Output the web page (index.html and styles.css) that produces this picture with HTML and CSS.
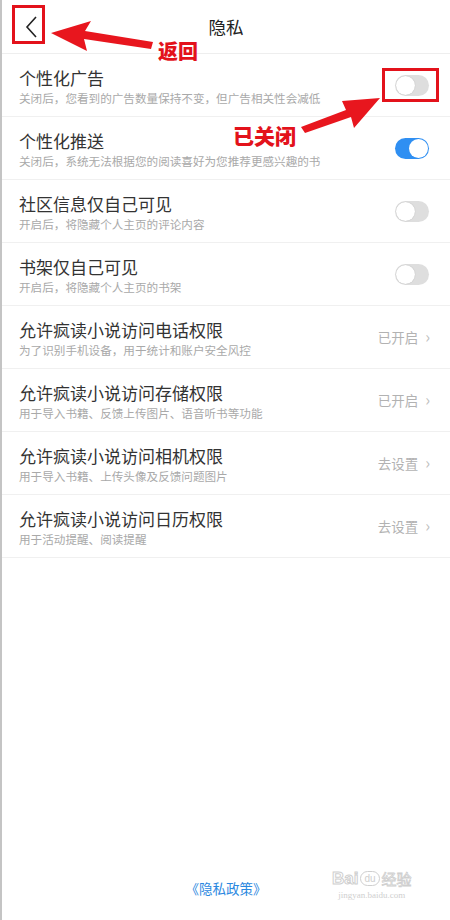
FILE: index.html
```html
<!DOCTYPE html>
<html lang="zh-CN">
<head>
<meta charset="utf-8">
<title>隐私</title>
<link rel="stylesheet" href="styles.css">
</head>
<body>
<div class="page">
  <header class="header">
    <div class="back">
      <svg width="14" height="24" viewBox="0 0 14 24"><polyline points="11,2 2,12 11,22" fill="none" stroke="#222" stroke-width="1.6" stroke-linejoin="miter"/></svg>
    </div>
    <div class="title">隐私</div>
    <div class="spacer"></div>
  </header>

  <div class="list">
    <div class="row">
      <div class="text"><div class="name">个性化广告</div><div class="desc">关闭后，您看到的广告数量保持不变，但广告相关性会减低</div></div>
      <div class="toggle"><span class="knob"></span></div>
    </div>
    <div class="row">
      <div class="text"><div class="name">个性化推送</div><div class="desc">关闭后，系统无法根据您的阅读喜好为您推荐更感兴趣的书</div></div>
      <div class="toggle on"><span class="knob"></span></div>
    </div>
    <div class="row">
      <div class="text"><div class="name">社区信息仅自己可见</div><div class="desc">开启后，将隐藏个人主页的评论内容</div></div>
      <div class="toggle"><span class="knob"></span></div>
    </div>
    <div class="row">
      <div class="text"><div class="name">书架仅自己可见</div><div class="desc">开启后，将隐藏个人主页的书架</div></div>
      <div class="toggle"><span class="knob"></span></div>
    </div>
    <div class="row">
      <div class="text"><div class="name">允许疯读小说访问电话权限</div><div class="desc">为了识别手机设备，用于统计和账户安全风控</div></div>
      <div class="status">已开启<span class="chev">›</span></div>
    </div>
    <div class="row">
      <div class="text"><div class="name">允许疯读小说访问存储权限</div><div class="desc">用于导入书籍、反馈上传图片、语音听书等功能</div></div>
      <div class="status">已开启<span class="chev">›</span></div>
    </div>
    <div class="row">
      <div class="text"><div class="name">允许疯读小说访问相机权限</div><div class="desc">用于导入书籍、上传头像及反馈问题图片</div></div>
      <div class="status">去设置<span class="chev">›</span></div>
    </div>
    <div class="row">
      <div class="text"><div class="name">允许疯读小说访问日历权限</div><div class="desc">用于活动提醒、阅读提醒</div></div>
      <div class="status">去设置<span class="chev">›</span></div>
    </div>
  </div>

  <div class="footer"><span class="policy">《隐私政策》</span></div>

  <!-- annotations overlay -->
  <div class="mark mark-back"></div>
  <div class="mark mark-toggle"></div>
  <svg class="arrows" width="450" height="200" viewBox="0 0 450 200">
    <polygon points="51,33 91,21 85,31 153,42 151,49 84,39 87,51" fill="#e8161e"/>
    <polygon points="380,98 342,101 346,110 301,127 305,133 351,117 354,128" fill="#e8161e"/>
  </svg>
  <div class="label label-back">返回</div>
  <div class="label label-off">已关闭</div>

  <div class="watermark">
    <div class="wm-top"><span class="wm-bai">Bai</span><span class="wm-du">du</span><span class="wm-jy">经验</span></div>
    <div class="wm-url">jingyan.baidu.com</div>
  </div>
</div>
</body>
</html>
```

FILE: styles.css
```css
* { box-sizing: border-box; }
html, body { margin: 0; padding: 0; background: #fff; }
body { font-family: "Noto Sans CJK SC", "Noto Sans", sans-serif; }

.page {
  position: relative;
  width: 450px;
  height: 920px;
  border-left: 2px solid #c4c4c4;
  display: flex;
  flex-direction: column;
  overflow: hidden;
}

.header {
  height: 54px;
  border-bottom: 1px solid #eeeeee;
  display: flex;
  align-items: center;
  padding: 0 10px;
}
.back { width: 36px; display: flex; justify-content: center; padding-left: 3px; margin-top: 0; }
.title { flex: 1; text-align: center; font-size: 17.5px; color: #222; margin-top: 0; }
.spacer { width: 36px; }

.row {
  height: 63px;
  border-bottom: 1px solid #f0f0f0;
  display: flex;
  align-items: center;
  padding: 0 20px 0 17px;
}
.text { flex: 1; display: flex; flex-direction: column; gap: 2px; margin-top: 4px; }
.name { font-size: 17px; line-height: 20px; color: #333; }
.desc { font-size: 11.6px; line-height: 16px; color: #a9a9a9; }

.toggle {
  width: 34px;
  height: 21px;
  border-radius: 11px;
  background: #dedede;
  position: relative;
  margin-right: 1px;
}
.toggle .knob {
  position: absolute;
  top: 1px;
  left: 1px;
  width: 19px;
  height: 19px;
  border-radius: 50%;
  background: #fff;
  box-shadow: 0 0 1px rgba(0,0,0,0.25);
}
.toggle.on { background: #2f8ff2; }
.toggle.on .knob { left: 14px; box-shadow: none; }

.status {
  font-size: 13.5px;
  color: #b2b2b2;
  display: flex;
  align-items: center;
  gap: 7px;
  margin-right: 0;
}
.chev { font-size: 16px; color: #c0c0c0; margin-top: -2px; }

.footer {
  margin-top: auto;
  padding-bottom: 21px;
  text-align: center;
}
.policy { font-size: 13.5px; color: #2b88e0; }

/* annotations */
.mark {
  position: absolute;
  border: 3.5px solid #e3121b;
}
.mark-back { left: 10px; top: 5px; width: 33px; height: 39px; }
.mark-toggle { left: 380px; top: 68px; width: 57px; height: 34px; }
.arrows { position: absolute; left: -2px; top: 0; }
.label {
  position: absolute;
  color: #e3121b;
  font-weight: 900;
  font-family: "Noto Sans CJK SC", sans-serif;
  line-height: 1;
}
.label-back { left: 156px; top: 41px; font-size: 20px; }
.label-off { left: 231px; top: 125px; font-size: 21px; }

.watermark {
  position: absolute;
  left: 330px;
  top: 868px;
  color: #cfcfcf;
  text-align: center;
  font-family: "Liberation Sans", sans-serif;
}
.wm-top { display: flex; align-items: center; gap: 2px; }
.wm-bai { font-size: 17px; font-weight: bold; color: #fff; -webkit-text-stroke: 1px #cfcfcf; }
.wm-du { font-size: 10px; border: 1px solid #cfcfcf; border-radius: 8px; padding: 1px 3px; }
.wm-jy { font-family: "Noto Sans CJK SC", sans-serif; font-size: 15px; color: #fff; -webkit-text-stroke: 0.8px #cfcfcf; }
.wm-url { font-family: "Liberation Serif", serif; font-size: 9px; margin-top: 1px; }
```
